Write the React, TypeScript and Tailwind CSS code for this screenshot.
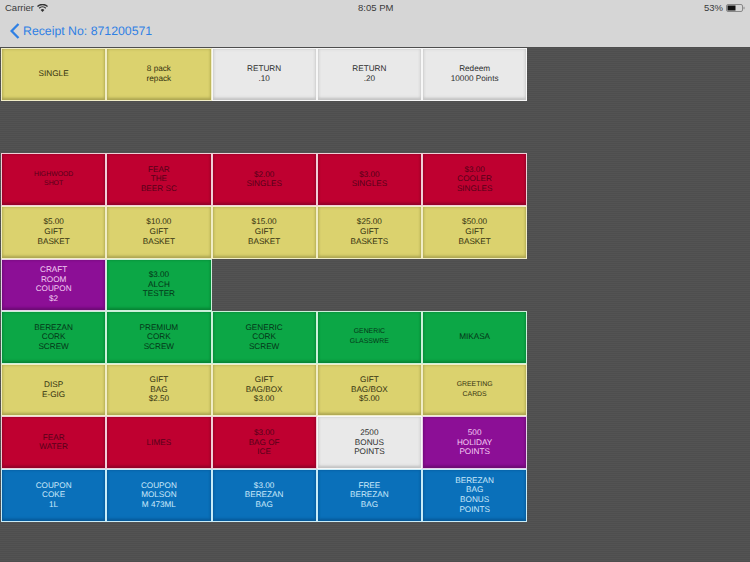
type Kind = "y" | "r" | "w" | "p" | "g" | "b";
const styles: Record<Kind, string> = {
  y: "border-[#f1edc6] bg-[#dbd26e] text-[#33310e] shadow-[inset_0_0_3px_#aea653,inset_0_-2px_3px_#aea653]",
  r: "border-[#f0ced6] bg-[#bf0030] text-[#560018] shadow-[inset_0_0_3px_#92002a,inset_0_-2px_3px_#92002a]",
  w: "border-[#f7f7f7] bg-[#e9e9e9] text-[#2e2e2e] shadow-[inset_0_0_3px_#c8c8c8,inset_0_-2px_3px_#c0c0c0]",
  p: "border-[#e8d0ea] bg-[#8c0f96] text-[#f3cdf3] shadow-[inset_0_0_3px_#6f0c78,inset_0_-2px_3px_#6a0b72]",
  g: "border-[#ccf0da] bg-[#0ca746] text-[#043518] shadow-[inset_0_0_3px_#088536,inset_0_-2px_3px_#088536]",
  b: "border-[#c8ecf8] bg-[#0a70ba] text-[#cbe9fa] shadow-[inset_0_0_3px_#085a98,inset_0_-2px_3px_#085a98]",
};

type Cell = [Kind, string, string?] | null;

const rows: Cell[][] = [
  [["y", "SINGLE"], ["y", "8 pack\nrepack"], ["w", "RETURN\n.10"], ["w", "RETURN\n.20"], ["w", "Redeem\n10000 Points"]],
  [null, null, null, null, null],
  [["r", "HIGHWOOD\nSHOT", "small"], ["r", "FEAR\nTHE\nBEER SC"], ["r", "$2.00\nSINGLES"], ["r", "$3.00\nSINGLES"], ["r", "$3.00\nCOOLER\nSINGLES"]],
  [["y", "$5.00\nGIFT\nBASKET"], ["y", "$10.00\nGIFT\nBASKET"], ["y", "$15.00\nGIFT\nBASKET"], ["y", "$25.00\nGIFT\nBASKETS"], ["y", "$50.00\nGIFT\nBASKET"]],
  [["p", "CRAFT\nROOM\nCOUPON\n$2"], ["g", "$3.00\nALCH\nTESTER"], null, null, null],
  [["g", "BEREZAN\nCORK\nSCREW"], ["g", "PREMIUM\nCORK\nSCREW"], ["g", "GENERIC\nCORK\nSCREW"], ["g", "GENERIC\nGLASSWRE", "small"], ["g", "MIKASA"]],
  [["y", "DISP\nE-GIG"], ["y", "GIFT\nBAG\n$2.50"], ["y", "GIFT\nBAG/BOX\n$3.00"], ["y", "GIFT\nBAG/BOX\n$5.00"], ["y", "GREETING\nCARDS", "small"]],
  [["r", "FEAR\nWATER"], ["r", "LIMES"], ["r", "$3.00\nBAG OF\nICE"], ["w", "2500\nBONUS\nPOINTS"], ["p", "500\nHOLIDAY\nPOINTS"]],
  [["b", "COUPON\nCOKE\n1L"], ["b", "COUPON\nMOLSON\nM 473ML"], ["b", "$3.00\nBEREZAN\nBAG"], ["b", "FREE\nBEREZAN\nBAG"], ["b", "BEREZAN\nBAG\nBONUS\nPOINTS"]],
];

function Button({ cell }: { cell: Cell }) {
  if (!cell) return <div />;
  const [kind, label, size] = cell;
  return (
    <div
      className={`flex items-center justify-center whitespace-pre-line border pb-[1px] text-center [text-rendering:geometricPrecision] ${styles[kind]} ${
        size === "small" ? "text-[6.9px] leading-[9.6px]" : "text-[8.2px] leading-[9.6px]"
      }`}
    >
      {label}
    </div>
  );
}

export default function App() {
  return (
    <div className="flex h-[562px] w-[750px] flex-col overflow-hidden bg-[#505050] bg-[repeating-linear-gradient(0deg,#4e4e4e_0px,#4e4e4e_1px,#535353_1px,#535353_2px)] font-['Liberation_Sans',sans-serif]">
      <header className="h-[47px] shrink-0 bg-[#d6d6d6]">
        <div className="relative flex h-[16px] items-center justify-between px-[5px] text-[9.5px] text-[#3a3a3a]">
          <div className="flex items-center gap-[3px]">
            <span>Carrier</span>
            <svg width="11" height="8" viewBox="0 0 11 8" fill="#333">
              <path d="M5.5 8 3.6 5.9a2.7 2.7 0 0 1 3.8 0L5.5 8Z" />
              <path d="M2.6 4.8 1.7 3.8a5.4 5.4 0 0 1 7.6 0l-.9 1a4.1 4.1 0 0 0-5.8 0Z" />
              <path d="M.9 3 0 2a7.9 7.9 0 0 1 11 0l-.9 1a6.6 6.6 0 0 0-9.2 0Z" />
            </svg>
          </div>
          <span className="absolute left-[358px]">8:05 PM</span>
          <div className="flex items-center gap-[3px]">
            <span>53%</span>
            <svg width="19" height="8" viewBox="0 0 19 8">
              <rect x=".5" y=".5" width="16" height="7" rx="1.5" fill="none" stroke="#888" />
              <rect x="1.5" y="1.5" width="8" height="5" fill="#111" />
              <rect x="17.5" y="2.8" width="1" height="2.4" fill="#888" />
            </svg>
          </div>
        </div>
        <div className="flex h-[30px] items-center pl-[10px] text-[12.3px] text-[#2f80e4] [text-rendering:geometricPrecision]">
          <svg width="10" height="16" viewBox="0 0 10 16" fill="none" stroke="#2f80e4" strokeWidth="2.3">
            <path d="M8.5 1 1.6 8l6.9 7" />
          </svg>
          <span className="ml-[3px]">Receipt No: 871200571</span>
        </div>
      </header>
      <main className="grid grid-cols-[repeat(5,105.25px)] auto-rows-[52.65px] pt-[1px] pl-[1px]">
        {rows.flat().map((cell, i) => (
          <Button key={i} cell={cell} />
        ))}
      </main>
    </div>
  );
}
